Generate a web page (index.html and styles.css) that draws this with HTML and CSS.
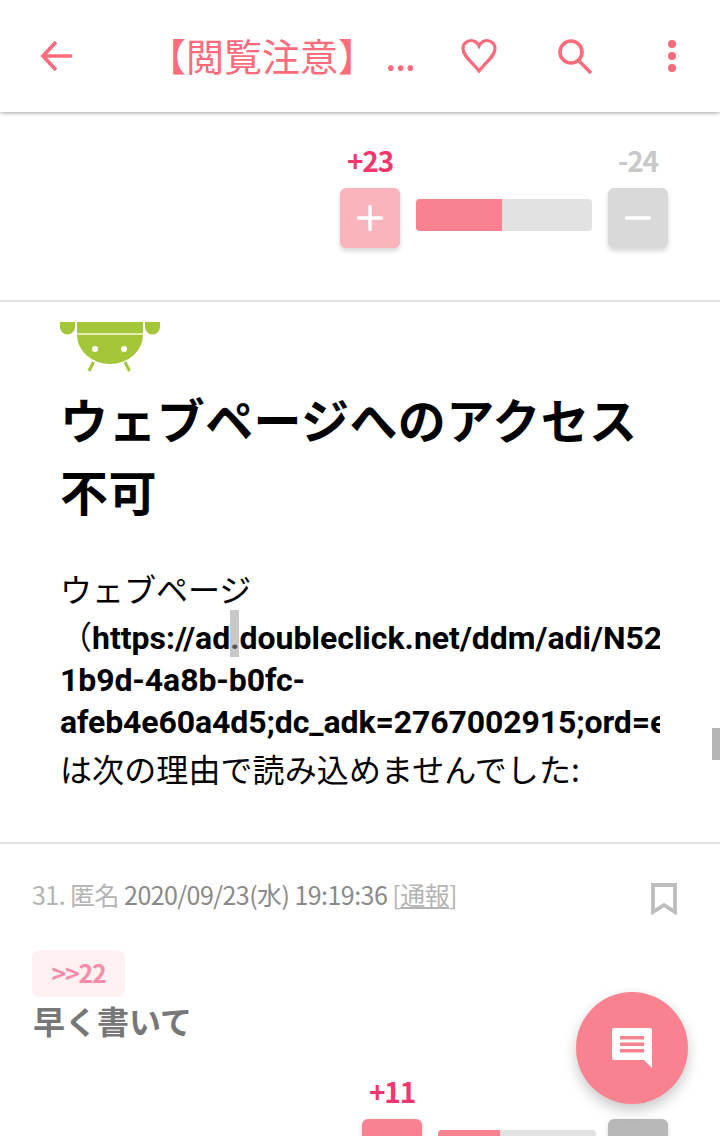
FILE: index.html
```html
<!DOCTYPE html>
<html lang="ja">
<head>
    <meta charset="UTF-8">
    <meta name="viewport" content="width=device-width, initial-scale=1.0">
    <title>閲覧注意</title>
    <link rel="stylesheet" href="styles.css">
</head>
<body>
    <!-- ヘッダー -->
    <header class="app-bar">
        <svg class="back-icon" width="36" height="36" viewBox="0 0 36 36">
            <path d="M33 18H4M17 4 4 18l13 14" fill="none" stroke="#ff6b7a" stroke-width="3.6"/>
        </svg>
        <div class="app-title">【閲覧注意】<span class="app-title-more">...</span></div>
        <svg class="heart-icon" width="38" height="36" viewBox="0 0 38 36">
            <path d="M19 33C12 24 3 18 3 10.500C3 5.500 7 2.500 11 2.500C15 2.500 17.500 5 19 8C20.500 5 23 2.500 27 2.500C31 2.500 35 5.500 35 10.500C35 18 26 24 19 33Z" fill="none" stroke="#ff6b7a" stroke-width="3.200"/>
        </svg>
        <svg class="search-icon" width="38" height="38" viewBox="0 0 38 38">
            <circle cx="15" cy="15" r="11" fill="none" stroke="#ff6b7a" stroke-width="3.600"/>
            <path d="M23 24 35 36" fill="none" stroke="#ff6b7a" stroke-width="3.600"/>
        </svg>
        <div class="more-icon"><i></i><i></i><i></i></div>
    </header>

    <div class="thread">
        <!-- 投票 -->
        <section class="vote-section">
            <div class="vote">
                <div class="vote-side">
                    <span class="count count-plus">+23</span>
                    <div class="vote-btn btn-plus-light">
                        <svg width="28" height="28" viewBox="0 0 28 28"><path d="M14 2.500v23M2.500 14h23" stroke="#fff" stroke-width="3.400" stroke-linecap="round"/></svg>
                    </div>
                </div>
                <div class="bar bar-wide"><div class="bar-fill" style="width: 49%"></div></div>
                <div class="vote-side">
                    <span class="count count-minus">-24</span>
                    <div class="vote-btn btn-minus-light">
                        <svg width="28" height="28" viewBox="0 0 28 28"><path d="M2.500 14h23" stroke="#fff" stroke-width="3.400" stroke-linecap="round"/></svg>
                    </div>
                </div>
            </div>
        </section>

        <!-- 広告枠のエラーページ -->
        <section class="error-frame">
            <svg class="android" width="100" height="50" viewBox="0 0 100 50">
                <path d="M0 0h15v5a7.500 7.500 0 0 1-15 0zM85 0h15v5a7.500 7.500 0 0 1-15 0z" fill="#a4c639"/>
                <path d="M17 0h66v13a33 29 0 0 1-66 0z" fill="#a4c639"/>
                <path d="M17 12h66" stroke="#e2edb4" stroke-width="2"/>
                <circle cx="35" cy="27" r="3" fill="#fff"/>
                <circle cx="64" cy="27" r="3" fill="#fff"/>
                <path d="M33.500 40 29 49M65 40l4.500 9" stroke="#a4c639" stroke-width="3"/>
            </svg>
            <h1 class="error-title">ウェブページへのアクセス不可</h1>
            <div class="error-body">
                <div class="error-line">ウェブページ</div>
                <div class="error-line url-first">（<b>https://ad<span class="selected">.</span>doubleclick.net/ddm/adi/N5295.1234</b></div>
                <div class="error-line url">1b9d-4a8b-b0fc-</div>
                <div class="error-line url">afeb4e60a4d5;dc_adk=2767002915;ord=e4r</div>
                <div class="error-line error-last">は次の理由で読み込めませんでした:</div>
            </div>
            <div class="scroll-thumb"></div>
        </section>

        <!-- コメント -->
        <section class="comment">
            <div class="comment-head">
                <div class="meta"><span class="meta-light">31. 匿名</span> 2020/09/23(水) 19:19:36 <span class="meta-light">[<u>通報</u>]</span></div>
                <svg class="bookmark" width="26" height="32" viewBox="0 0 26 32">
                    <path d="M2 2h22v27l-11-7-11 7z" fill="none" stroke="#bdbdbd" stroke-width="3.800"/>
                </svg>
            </div>
            <div class="anchor">&gt;&gt;22</div>
            <div class="comment-text">早く書いて</div>
            <div class="vote vote-second">
                <div class="vote-side">
                    <span class="count count-plus">+11</span>
                    <div class="vote-btn btn-plus"></div>
                </div>
                <div class="bar bar-narrow"><div class="bar-fill" style="width: 39%"></div></div>
                <div class="vote-side">
                    <span class="count count-dark">-7</span>
                    <div class="vote-btn btn-minus"></div>
                </div>
            </div>
        </section>
    </div>

    <!-- 書き込みボタン -->
    <div class="fab">
        <svg width="42" height="42" viewBox="0 0 42 42">
            <path d="M3 1h36a2 2 0 0 1 2 2v38l-8-8H3a2 2 0 0 1-2-2V3a2 2 0 0 1 2-2z" fill="#fff"/>
            <path d="M9 9h24v3.500H9zM9 15.500h24v3.500H9zM9 22h24v3.500H9z" fill="#f8828f"/>
        </svg>
    </div>
</body>
</html>
```

FILE: styles.css
```css
* {
    margin: 0;
    padding: 0;
    box-sizing: border-box;
}

html, body {
    height: 1136px;
    overflow: hidden;
}

body {
    position: relative;
    display: flex;
    flex-direction: column;
    font-family: "Noto Sans CJK JP", "Noto Sans", sans-serif;
    background: #fff;
    color: #000;
}

/* ヘッダー */
.app-bar {
    position: relative;
    z-index: 2;
    flex: none;
    height: 112px;
    display: flex;
    align-items: center;
    background: #fff;
    box-shadow: 0 1px 4px rgba(0, 0, 0, 0.35);
}

.back-icon {
    flex: none;
    margin-left: 39px;
}

.app-title {
    flex: none;
    width: 312px;
    margin-left: 73px;
    font-size: 38px;
    line-height: 48px;
    white-space: nowrap;
    color: #ff6b7a;
}

.app-title-more {
    font-size: 30px;
    font-weight: 700;
    margin-left: 10px;
}

.heart-icon {
    flex: none;
}

.search-icon {
    flex: none;
    margin-left: 58px;
}

.more-icon {
    flex: none;
    display: flex;
    flex-direction: column;
    gap: 4px;
    margin-left: 74px;
}

.more-icon i {
    display: block;
    width: 8px;
    height: 8px;
    border-radius: 50%;
    background: #ff6b7a;
}

.thread {
    flex: none;
}

/* 投票 */
.vote-section {
    height: 190px;
    padding-top: 32px;
    border-bottom: 2px solid #e2e2e2;
}

.vote {
    display: flex;
    justify-content: flex-end;
    align-items: flex-start;
    gap: 16px;
    padding-right: 52px;
}

.vote-side {
    width: 60px;
    display: flex;
    flex-direction: column;
    align-items: center;
}

.count {
    font-size: 28px;
    line-height: 32px;
    font-weight: 700;
    height: 44px;
    letter-spacing: -1.2px;
    white-space: nowrap;
}

.count-plus { color: #f5356c; }
.count-minus { color: #c8c8c8; }
.count-dark { color: #777; }

.vote-btn {
    width: 60px;
    height: 60px;
    border-radius: 6px;
    display: flex;
    align-items: center;
    justify-content: center;
    box-shadow: 0 3px 5px rgba(0, 0, 0, 0.16);
}

.btn-plus-light { background: #fbb4bc; }
.btn-minus-light { background: #d9d9d9; }
.btn-plus { background: #f8828f; }
.btn-minus { background: #b8b8b8; }

.bar {
    height: 32px;
    margin-top: 55px;
    border-radius: 4px;
    overflow: hidden;
    background: #e2e2e2;
}

.bar-wide { width: 176px; }

.bar-narrow {
    width: 158px;
    margin-right: -4px;
}

.bar-fill {
    height: 100%;
    background: #f8828f;
}

/* 広告枠のエラーページ */
.error-frame {
    position: relative;
    height: 542px;
    padding: 20px 60px 0;
    border-bottom: 2px solid #e2e2e2;
    overflow: hidden;
}

.android {
    display: block;
}

.error-title {
    font-size: 48px;
    line-height: 72px;
    font-weight: 700;
    letter-spacing: 0.4px;
    margin-top: 10px;
    width: 590px;
}

.error-body {
    margin-top: 38px;
    width: 600px;
    overflow: hidden;
    font-size: 32px;
}

.error-line {
    line-height: 48px;
    white-space: nowrap;
}

.error-last {
    margin-top: 1px;
    letter-spacing: 0.1px;
}

.url-first {
    margin-top: 2px;
    line-height: 42px;
}

.url-first b,
.url {
    font-family: Roboto, "Noto Sans", sans-serif;
    font-weight: 700;
}

.url {
    line-height: 42px;
    letter-spacing: -0.1px;
}

.selected {
    padding: 9px 0 0;
    background: #c8c8c8;
    color: #555;
}

.scroll-thumb {
    position: absolute;
    right: 0;
    top: 426px;
    width: 8px;
    height: 32px;
    background: #b4b4b4;
}

/* コメント */
.comment {
    padding: 38px 0 0 32px;
}

.comment-head {
    display: flex;
    justify-content: space-between;
    align-items: flex-start;
    padding-right: 43px;
    height: 68px;
}

.meta {
    font-size: 25px;
    line-height: 24px;
    letter-spacing: -0.55px;
    color: #8a8a8a;
}

.meta-light {
    color: #b4b4b4;
}

.bookmark {
    flex: none;
    margin-top: 1px;
}

.anchor {
    width: 93px;
    height: 47px;
    border-radius: 8px;
    background: #fff0f2;
    color: #f78ca8;
    font-size: 25px;
    font-weight: 700;
    line-height: 44px;
    text-align: center;
    letter-spacing: -1.2px;
}

.comment-text {
    font-size: 32px;
    line-height: 50px;
    font-weight: 700;
    color: #777;
    margin-top: -2px;
    margin-left: 1px;
}

.vote-second {
    margin-top: 30px;
}

/* 書き込みボタン */
.fab {
    position: absolute;
    z-index: 3;
    left: 576px;
    top: 992px;
    width: 112px;
    height: 112px;
    border-radius: 50%;
    background: #f8828f;
    display: flex;
    align-items: center;
    justify-content: center;
    box-shadow: 0 6px 14px rgba(0, 0, 0, 0.22);
}
```
